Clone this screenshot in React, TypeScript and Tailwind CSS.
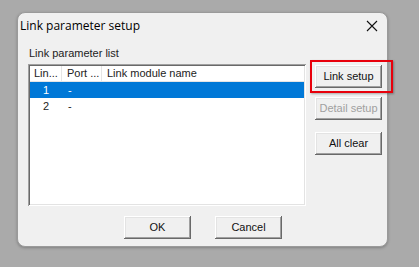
import React from "react";

const btn =
  "h-[23px] w-[67px] bg-[#f0f0f0] flex items-center justify-center text-[11px] shadow-[inset_-1px_-1px_#696969,inset_1px_1px_#ffffff,inset_-2px_-2px_#a0a0a0,inset_2px_2px_#e3e3e3]";

export default function App() {
  return (
    <div
      className="relative w-[419px] h-[267px] bg-[#aaaaaa] pt-[12px] pl-[17px] overflow-hidden"
      style={{ fontFamily: '"Liberation Sans", Arial, sans-serif' }}
    >
      <div className="w-[371px] h-[235px] bg-[#f0f0f0] rounded-[8px] border border-[#9a9a9a] flex flex-col shadow-[0_1px_3px_rgba(0,0,0,0.25)]">
        {/* title bar */}
        <div className="h-[24px] flex items-center pl-[2px] pr-[9px] pt-[1px]">
          <span className="text-[12px] text-black flex-1" style={{ fontFamily: '"Open Sans", "Liberation Sans", sans-serif' }}>
            Link parameter setup
          </span>
          <svg width="12" height="12" viewBox="0 0 12 12" className="mr-[0px]">
            <path d="M1 1 L11 11 M11 1 L1 11" stroke="#111" strokeWidth="1.1" />
          </svg>
        </div>
        {/* content */}
        <div className="flex pl-[10px] mt-[9px]">
          <div className="flex flex-col w-[278px]">
            <div className="h-[14px] leading-[14px] text-[11px] text-[#222] pl-[1px]">Link parameter list</div>
            <div className="mt-[4px] h-[142px] bg-white p-[2px] shadow-[inset_1px_1px_#a0a0a0,inset_-1px_-1px_#ffffff,inset_2px_2px_#696969,inset_-2px_-2px_#e3e3e3]">
              <div className="flex h-[16px] text-[11px] text-[#222] border-b border-[#e5e5e5] leading-[15px]">
                <div className="w-[32px] border-r border-[#e5e5e5] pl-[4px]">Lin...</div>
                <div className="w-[40px] border-r border-[#e5e5e5] pl-[5px]">Port ...</div>
                <div className="flex-1 pl-[5px]">Link module name</div>
              </div>
              <div className="flex h-[16px] bg-[#0078d7] text-white text-[11px] leading-[16px]">
                <div className="w-[32px] text-center">1</div>
                <div className="pl-[6px]">-</div>
              </div>
              <div className="flex h-[16px] text-[#222] text-[11px] leading-[16px]">
                <div className="w-[32px] text-center">2</div>
                <div className="pl-[6px]">-</div>
              </div>
            </div>
          </div>
          <div className="flex flex-col ml-[9px] pt-[19px]">
            <div className={btn + " text-[#111]"}>Link setup</div>
            <div className={btn + " mt-[9px] text-[#a0a0a0]"}>Detail setup</div>
            <div className={btn + " mt-[12px] text-[#111]"}>All clear</div>
          </div>
        </div>
        {/* bottom buttons */}
        <div className="flex mt-[10px] pl-[106px] gap-[24px]">
          <div className={btn + " text-[#111]"}>OK</div>
          <div className={btn + " text-[#111]"}>Cancel</div>
        </div>
      </div>
      {/* annotation highlight */}
      <div className="absolute left-[310px] top-[60px] w-[83px] h-[33px] border-[2px] border-[#e8000b] shadow-[1px_1px_2px_rgba(0,0,0,0.3)]" />
    </div>
  );
}
